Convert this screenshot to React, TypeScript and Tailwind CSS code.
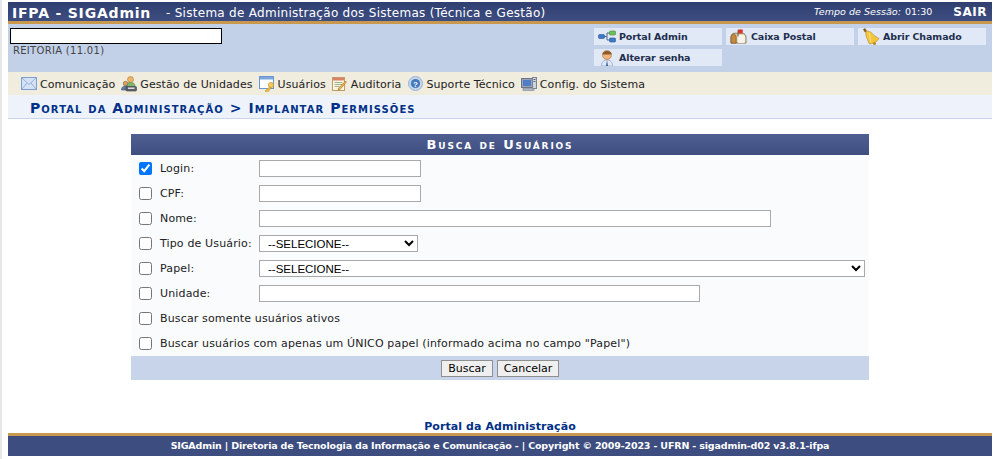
import React from "react";

const Mail = () => (
  <svg width="16" height="13" viewBox="0 0 16 13" className="shrink-0">
    <rect x="0.5" y="0.5" width="15" height="12" fill="#d5e2f6" stroke="#7f9fd2" />
    <path d="M1 1l7 6.500L15 1M1 12l5-6M15 12l-5-6" fill="none" stroke="#94b1de" />
  </svg>
);
const People = () => (
  <svg width="16" height="16" viewBox="0 0 16 16" className="shrink-0">
    <circle cx="9.500" cy="3.500" r="3" fill="#eeb36a" stroke="#b57a36" strokeWidth="0.6" />
    <path d="M6 10c0-3 1.500-3.500 3.500-3.500S14 7 14 10v2H6z" fill="#82b56c" stroke="#558a45" strokeWidth="0.6" />
    <circle cx="4.500" cy="7.500" r="2.200" fill="#d9a36a" stroke="#7a5a30" strokeWidth="0.6" />
    <path d="M0.500 14c0-3 2-4 4-4s4 1 4 4z" fill="#5c7fa8" stroke="#38506e" strokeWidth="0.6" />
    <rect x="5" y="10.500" width="10.500" height="4.500" rx="1" fill="#5f6266" stroke="#3f4144" strokeWidth="0.6" />
    <rect x="7" y="11.500" width="6.500" height="1.500" fill="#d7dadf" />
  </svg>
);
const Users = () => (
  <svg width="16" height="16" viewBox="0 0 16 16" className="shrink-0">
    <rect x="0.500" y="0.500" width="14" height="12" fill="#fff" stroke="#6b95cf" />
    <rect x="1" y="1" width="13" height="2.500" fill="#7ba6e0" />
    <circle cx="12" cy="9" r="2.600" fill="#f4c95a" stroke="#c4962a" strokeWidth="0.7" />
    <path d="M10.500 11L6 15l1.500 1 1-1 1 .5 2.500-4z" fill="#eabb44" stroke="#c4962a" strokeWidth="0.6" />
  </svg>
);
const Audit = () => (
  <svg width="15" height="16" viewBox="0 0 15 16" className="shrink-0">
    <rect x="0.500" y="1.500" width="12" height="13" fill="#fdf6e4" stroke="#c09a68" />
    <rect x="1" y="2" width="11" height="2.500" fill="#dd8067" />
    <path d="M2.500 6.500h8M2.500 8.500h8M2.500 10.500h5" stroke="#9db78c" />
    <path d="M13.500 5l1 1-6.500 7.500-2 .8.500-2z" fill="#efb548" stroke="#a66f23" strokeWidth="0.6" />
  </svg>
);
const Help = () => (
  <svg width="15" height="15" viewBox="0 0 15 15" className="shrink-0">
    <circle cx="7.500" cy="7.500" r="7" fill="#c3d6ec" stroke="#9bb3d3" />
    <circle cx="7.500" cy="7.500" r="4.600" fill="#4478bb" />
    <text x="7.500" y="10.500" textAnchor="middle" fontSize="8" fontWeight="700" fontFamily="Liberation Sans, sans-serif" fill="#fff">?</text>
  </svg>
);
const Monitor = () => (
  <svg width="16" height="16" viewBox="0 0 16 16" className="shrink-0">
    <rect x="0.500" y="2.500" width="11" height="9" fill="#98a4b6" stroke="#6c7686" />
    <rect x="2" y="4" width="8" height="6" fill="#4f7ec7" />
    <rect x="11.500" y="1.500" width="4" height="11" fill="#cfd4dc" stroke="#7a8494" />
    <path d="M12.500 3.500h2M12.500 5.500h2" stroke="#5d6878" />
    <rect x="2" y="12.500" width="11" height="2" fill="#aeb6c2" stroke="#7a8494" strokeWidth="0.6" />
  </svg>
);
const Tree = () => (
  <svg width="18" height="13" viewBox="0 0 18 13" className="shrink-0">
    <path d="M6 6.500h3V3h3M9 6.500V10h3" fill="none" stroke="#4d6b8f" />
    <rect x="0.500" y="4.500" width="6" height="4" rx="1" fill="#3d78c9" stroke="#2a5594" strokeWidth="0.6" />
    <rect x="11.500" y="1" width="6" height="4" rx="1" fill="#6cc05a" stroke="#3f8a33" strokeWidth="0.6" />
    <rect x="11.500" y="8" width="6" height="4" rx="1" fill="#3d78c9" stroke="#2a5594" strokeWidth="0.6" />
  </svg>
);
const Mailbox = () => (
  <svg width="17" height="16" viewBox="0 0 18 17" className="shrink-0">
    <path d="M1 9c0-3 1.500-4.500 3.500-4.500H13C15.500 4.500 17 6.500 17 9v6H1z" fill="#d8c9a0" stroke="#7d6a42" strokeWidth="0.8" />
    <path d="M4 5.500C5.500 5.500 6.500 7 6.500 9v6H1V9c0-2 1.500-3.500 3-3.500z" fill="#c58a3f" stroke="#7d5a2c" strokeWidth="0.8" />
    <rect x="8" y="6" width="8" height="9" rx="2" fill="#f6f3ea" />
    <path d="M8.500 8V1.500" stroke="#6b5a3c" />
    <rect x="8.500" y="0.500" width="5" height="4" fill="#d8342b" />
  </svg>
);
const Bell = () => (
  <svg width="18" height="18" viewBox="0 0 18 18" className="shrink-0">
    <path d="M1 1.500L3 0l2 3-2 1.500z" fill="#8f6118" />
    <path d="M4 3.500c3-1 6 1 8 4l5 3c-2 3.500-7 6-10 5l-1.500-4C4 9 3.500 6 4 3.500z" fill="#f3c53c" stroke="#bd871c" strokeWidth="0.6" />
    <path d="M7 4.500c1 3 1.500 6 1.500 10" stroke="#fbe38a" fill="none" />
    <circle cx="12.500" cy="15.500" r="1.500" fill="#bd871c" />
  </svg>
);
const Person = () => (
  <svg width="16" height="17" viewBox="0 0 16 17" className="shrink-0">
    <path d="M2.500 17c0-4 2-6 5.500-6s5.500 2 5.500 6z" fill="#dfe8f6" stroke="#7f93b8" strokeWidth="0.6" />
    <path d="M8 11l-1 6h2z" fill="#3d5d9e" />
    <circle cx="8" cy="6" r="4.500" fill="#f0b47c" stroke="#a8703a" strokeWidth="0.6" />
    <path d="M3.500 4.500C4.500 1.500 11 1 12.500 4.500l-.5 1H4z" fill="#8a5a2c" />
  </svg>
);

const topLinks: [React.ReactNode, string][] = [
  [<Tree />, "Portal Admin"],
  [<Mailbox />, "Caixa Postal"],
  [<Bell />, "Abrir Chamado"],
  [<Person />, "Alterar senha"],
];

const TopLink = ({ icon, text }: { icon: React.ReactNode; text: string }) => (
  <div className="flex h-[17px] w-[128px] items-center overflow-hidden bg-[#e1e8f6]">
    <span className="flex w-[25px] shrink-0 justify-center">{icon}</span>
    <span className="pt-[1px] text-[9.500px] font-bold tracking-[-0.1px] text-[#222e4e]">{text}</span>
  </div>
);

const NavItem = ({ icon, text }: { icon: React.ReactNode; text: string }) => (
  <div className="flex items-center gap-[3px]">
    <span className="flex w-[16px] justify-center">{icon}</span>
    <span className="pt-[3px] tracking-[0.08px]">{text}</span>
  </div>
);

const inputClass = "h-[17px] rounded-none border border-[#a9a9a9] bg-white";
const selectClass =
  "h-[17px] rounded-none border border-[#a9a9a9] bg-white pl-1 text-[11.500px] text-black [font-family:'Liberation_Sans',sans-serif]";

const Row = ({
  label,
  checked,
  children,
}: {
  label: string;
  checked?: boolean;
  children?: React.ReactNode;
}) => (
  <div className="flex h-[25px] items-center pl-2">
    <input type="checkbox" defaultChecked={checked} className="m-0 h-[13px] w-[13px] shrink-0" />
    <span className="ml-2 w-[99px] shrink-0 whitespace-nowrap pt-[2px] tracking-[0.15px]">{label}</span>
    {children}
  </div>
);

export default function App() {
  return (
    <div className="h-[459px] w-[1000px] overflow-hidden border-l-2 border-[#e6e6e6] bg-white pl-[6px] pr-2 pt-[2px] text-[11px] text-[#222] [font-family:'DejaVu_Sans',Verdana,sans-serif]">
      <header className="flex h-[22px] items-center justify-between border-b-[3px] border-[#c8984f] bg-gradient-to-b from-[#2f3f70] to-[#3e4d80] pl-[4px] pr-[5px] text-white">
        <div className="flex items-center pt-[3px]">
          <span className="w-[154px] text-[14px] font-bold tracking-[0.8px]">IFPA - SIGAdmin</span>
          <span className="text-[12px] tracking-[0.28px]">- Sistema de Administração dos Sistemas (Técnica e Gestão)</span>
        </div>
        <div className="flex items-center pt-[1px]">
          <span className="text-[9.500px] italic tracking-[0.05px]">Tempo de Sessão:</span>
          <span className="ml-1 text-[9.500px]">01:30</span>
          <span className="ml-[21px] text-[12px] font-bold tracking-[0.5px]">SAIR</span>
        </div>
      </header>

      <section className="flex h-[48px] justify-between bg-[#c3d1e8] pl-[2px] pr-[6px] pt-1">
        <div>
          <div className="h-[16px] w-[212px] border border-black bg-white" />
          <div className="ml-[3px] pt-[1px] text-[10px] leading-[12px] tracking-[0.3px] text-[#444]">REITORIA (11.01)</div>
        </div>
        <div className="grid h-fit grid-cols-3 gap-x-1 gap-y-1">
          {topLinks.map(([icon, text]) => (
            <TopLink key={text} icon={icon} text={text} />
          ))}
        </div>
      </section>

      <nav className="flex h-[23px] items-center gap-[6px] bg-[#f0ecde] pl-[13px] text-[11px] text-[#222]">
        <NavItem icon={<Mail />} text="Comunicação" />
        <NavItem icon={<People />} text="Gestão de Unidades" />
        <NavItem icon={<Users />} text="Usuários" />
        <NavItem icon={<Audit />} text="Auditoria" />
        <NavItem icon={<Help />} text="Suporte Técnico" />
        <NavItem icon={<Monitor />} text="Config. do Sistema" />
      </nav>

      <div className="flex h-[24px] items-center border-b border-[#c9d5e8] bg-[#eef3fb] pl-[22px] pt-[3px] text-[14px] font-bold tracking-[1.04px] text-[#003087] [font-variant:small-caps]">
        Portal da Administração &gt; Implantar Permissões
      </div>

      <main className="mx-auto mt-[15px] h-[246px] w-[738px]">
        <div className="flex h-[21px] items-center justify-center bg-gradient-to-b from-[#4f5f92] to-[#3f4e80] pt-[1px] text-[13px] font-bold tracking-[1.85px] text-white [font-variant:small-caps]">
          Busca de Usuários
        </div>
        <div className="h-[201px] bg-[#f9fbfd] pt-[1px]">
          <Row label="Login:" checked>
            <input className={`${inputClass} w-[162px]`} />
          </Row>
          <Row label="CPF:">
            <input className={`${inputClass} w-[162px]`} />
          </Row>
          <Row label="Nome:">
            <input className={`${inputClass} w-[512px]`} />
          </Row>
          <Row label="Tipo de Usuário:">
            <select className={`${selectClass} w-[159px]`}>
              <option>--SELECIONE--</option>
            </select>
          </Row>
          <Row label="Papel:">
            <select className={`${selectClass} w-[606px]`}>
              <option>--SELECIONE--</option>
            </select>
          </Row>
          <Row label="Unidade:">
            <input className={`${inputClass} w-[441px]`} />
          </Row>
          <Row label="Buscar somente usuários ativos" />
          <div className="flex h-[25px] items-center pl-2">
            <input type="checkbox" className="m-0 h-[13px] w-[13px] shrink-0" />
            <span className="ml-2 whitespace-nowrap pt-[2px] tracking-[0.15px]">Buscar usuários com apenas um ÚNICO papel (informado acima no campo "Papel")</span>
          </div>
        </div>
        <div className="flex h-[24px] items-center justify-center gap-1 bg-[#c8d4ea]">
          <button className="h-[17px] w-[52px] border border-[#8f8f8f] bg-[#efefef] text-[11px] text-black">Buscar</button>
          <button className="h-[17px] w-[62px] border border-[#8f8f8f] bg-[#efefef] text-[11px] text-black">Cancelar</button>
        </div>
      </main>

      <footer className="mt-[39px]">
        <div className="h-[14px] pt-[1px] text-center text-[11px] font-bold leading-[14px] tracking-[0.08px] text-[#003087]">Portal da Administração</div>
        <div className="flex h-[23px] items-center justify-center border-t-[3px] border-[#c8984f] bg-[#3e4d80] text-[9.500px] font-bold tracking-[-0.16px] text-white">
          SIGAdmin | Diretoria de Tecnologia da Informação e Comunicação - | Copyright © 2009-2023 - UFRN - sigadmin-d02 v3.8.1-ifpa
        </div>
      </footer>
    </div>
  );
}
